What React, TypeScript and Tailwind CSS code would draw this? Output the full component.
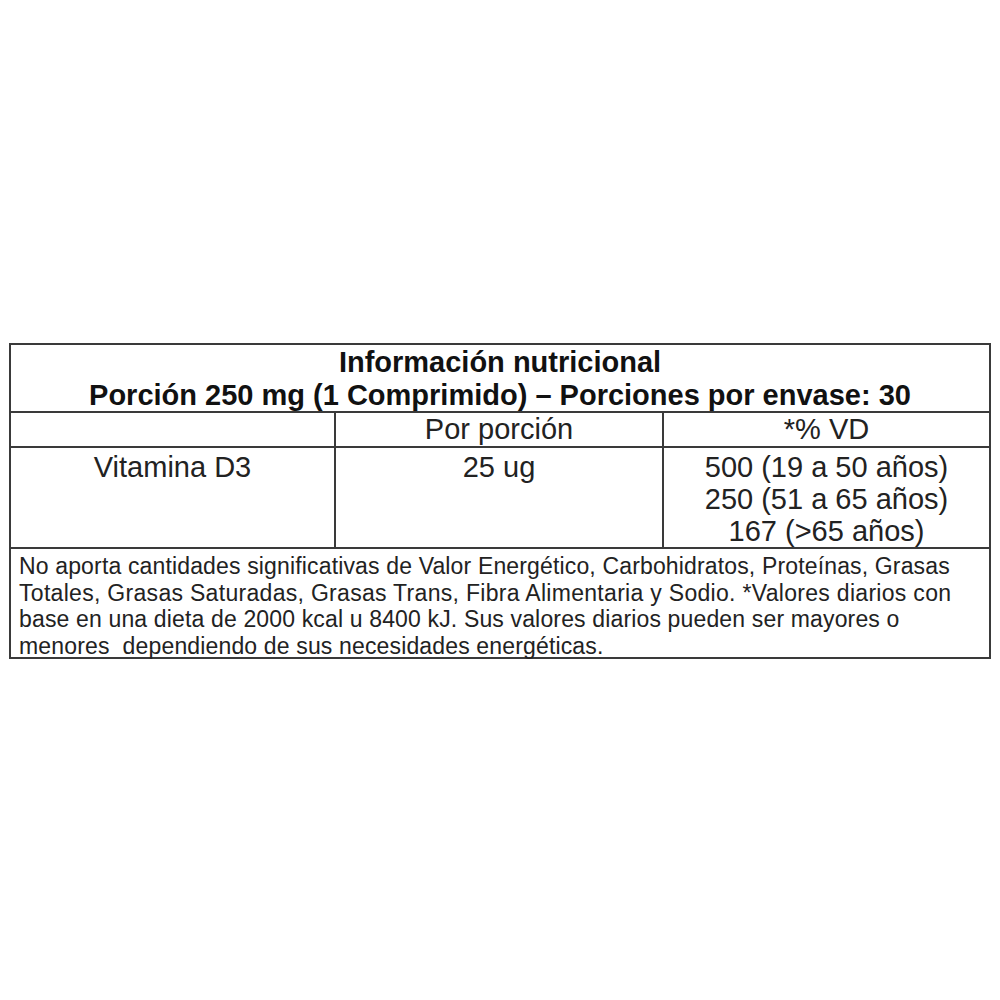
import React from 'react';

const font = { fontFamily: '"Liberation Sans", Arial, sans-serif' };

export default function App() {
  return (
    <div className="min-h-screen bg-white pt-[343px] pl-[9px]" style={font}>
      <div className="w-[982px] border-2 border-[#3a3a3a] text-[#222]">
        {/* Title */}
        <div className="h-[68px] border-b-2 border-[#3a3a3a] pt-[1px] text-center font-bold text-[29px] leading-[33px] text-[#111]">
          <div>Información nutricional</div>
          <div>Porción 250 mg (1 Comprimido) – Porciones por envase: 30</div>
        </div>

        {/* Header row */}
        <div className="grid h-[35px] grid-cols-[325px_328px_1fr] border-b-2 border-[#3a3a3a] text-center text-[29px] leading-[33px]">
          <div className="border-r-2 border-[#3a3a3a]"></div>
          <div className="border-r-2 border-[#3a3a3a]">Por porción</div>
          <div>*% VD</div>
        </div>

        {/* Data row */}
        <div className="grid h-[101px] grid-cols-[325px_328px_1fr] border-b-2 border-[#3a3a3a] text-center text-[29px] leading-[32px]">
          <div className="border-r-2 border-[#3a3a3a] pt-[3px]">Vitamina D3</div>
          <div className="border-r-2 border-[#3a3a3a] pt-[3px]">25 ug</div>
          <div className="pt-[3px]">
            <div>500 (19 a 50 años)</div>
            <div>250 (51 a 65 años)</div>
            <div>167 (&gt;65 años)</div>
          </div>
        </div>

        {/* Footer note */}
        <div className="h-[108px] px-[8px] pt-[4px] text-[23px] leading-[26.5px] tracking-[0.15px] whitespace-pre-wrap">
          {'No aporta cantidades significativas de Valor Energético, Carbohidratos, Proteínas, Grasas\n'}
          <span className="tracking-[0.3px]">{'Totales, Grasas Saturadas, Grasas Trans, Fibra Alimentaria y Sodio. *Valores diarios con'}</span>
          {'\nbase en una dieta de 2000 kcal u 8400 kJ. Sus valores diarios pueden ser mayores o\nmenores  dependiendo de sus necesidades energéticas.'}
        </div>
      </div>
    </div>
  );
}
